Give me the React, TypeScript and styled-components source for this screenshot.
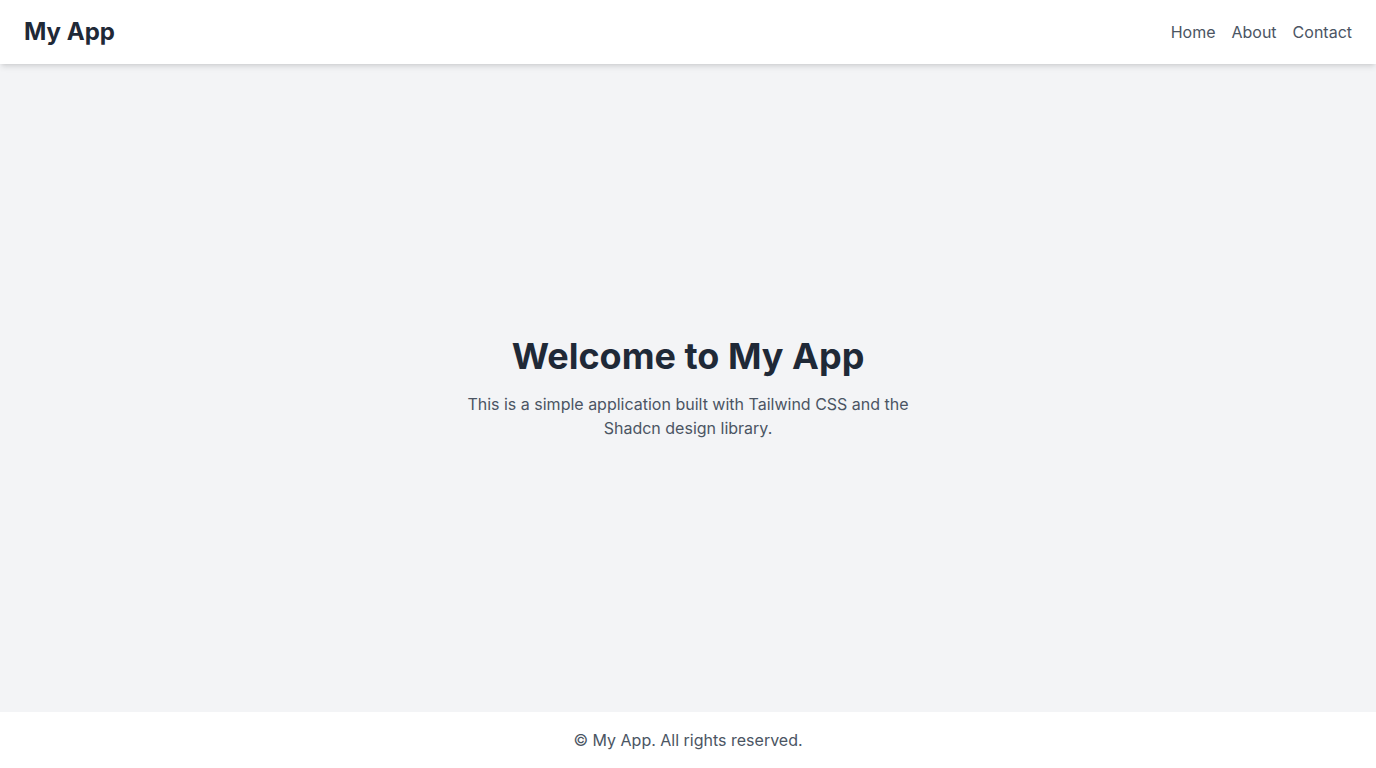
import React from "react";
import styled, { createGlobalStyle } from "styled-components";

const GlobalStyle = createGlobalStyle`
  html, body { margin: 0; padding: 0; }
  body {
    font-family: Inter, "Noto Sans", "Liberation Sans", sans-serif;
    -webkit-font-smoothing: antialiased;
  }
  * { box-sizing: border-box; }
`;

const Page = styled.div`
  display: flex;
  flex-direction: column;
  min-height: 100vh;
  background: #f3f4f6;
`;

const Header = styled.header`
  display: flex;
  align-items: center;
  justify-content: space-between;
  padding: 16px 24px;
  background: #ffffff;
  box-shadow: 0 4px 6px -1px rgba(0, 0, 0, 0.1), 0 2px 4px -2px rgba(0, 0, 0, 0.1);
  position: relative;
  z-index: 1;
`;

const Brand = styled.h1`
  margin: 0;
  font-size: 24px;
  line-height: 32px;
  font-weight: 700;
  color: #1f2937;
`;

const Nav = styled.nav`
  display: flex;
  gap: 16px;
`;

const NavLink = styled.a`
  font-size: 16px;
  line-height: 24px;
  color: #4b5563;
  text-decoration: none;
`;

const Main = styled.main`
  flex: 1;
  display: flex;
  flex-direction: column;
  align-items: center;
  justify-content: center;
  text-align: center;
  padding: 0 24px;
`;

const Title = styled.h2`
  margin: 0;
  font-size: 36px;
  line-height: 40px;
  font-weight: 700;
  color: #1f2937;
`;

const Lead = styled.p`
  margin: 16px 0 0;
  max-width: 448px;
  font-size: 16px;
  line-height: 24px;
  color: #4b5563;
`;

const Footer = styled.footer`
  padding: 16px;
  background: #ffffff;
  text-align: center;
  font-size: 16px;
  line-height: 24px;
  color: #4b5563;
`;

export default function App() {
  return (
    <>
      <GlobalStyle />
      <Page>
        <Header>
          <Brand>My App</Brand>
          <Nav>
            <NavLink href="#">Home</NavLink>
            <NavLink href="#">About</NavLink>
            <NavLink href="#">Contact</NavLink>
          </Nav>
        </Header>
        <Main>
          <Title>Welcome to My App</Title>
          <Lead>
            This is a simple application built with Tailwind CSS and the Shadcn design library.
          </Lead>
        </Main>
        <Footer>© My App. All rights reserved.</Footer>
      </Page>
    </>
  );
}
